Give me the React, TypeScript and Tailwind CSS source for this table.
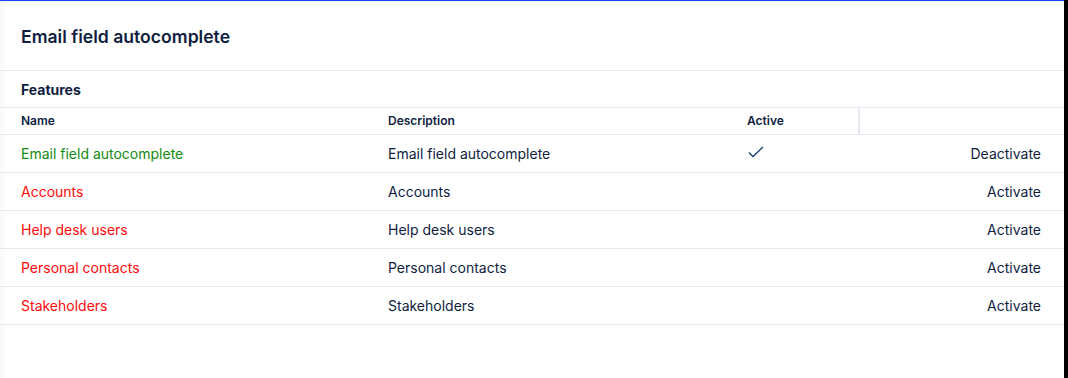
const rows = [
  { name: 'Email field autocomplete', desc: 'Email field autocomplete', active: true },
  { name: 'Accounts', desc: 'Accounts', active: false },
  { name: 'Help desk users', desc: 'Help desk users', active: false },
  { name: 'Personal contacts', desc: 'Personal contacts', active: false },
  { name: 'Stakeholders', desc: 'Stakeholders', active: false },
]

function Check() {
  return (
    <svg width="16" height="12" viewBox="0 0 16 12" fill="none">
      <path d="M1 6.5 L5 10.5 L15 1" stroke="#1e3a6e" strokeWidth="1.3" />
    </svg>
  )
}

export default function App() {
  return (
    <div className="flex h-[378px] w-[1068px] bg-black font-['Inter',sans-serif] text-[#0f1d3f]">
      <div className="h-full w-[1064px] border-t border-[#1148ff] bg-white shadow-[inset_0_10px_10px_-10px_rgba(0,0,0,0.06),inset_10px_0_10px_-10px_rgba(0,0,0,0.06)]">
        {/* Title */}
        <div className="flex h-[70px] items-center border-b border-[#e3e8f1] px-[21px] pt-[3px]">
          <h1 className="text-[17.6px] font-semibold leading-none">Email field autocomplete</h1>
        </div>

        {/* Section */}
        <div className="flex h-[37px] items-center border-b border-[#e3e8f1] px-[21px]">
          <h2 className="text-[14px] font-bold">Features</h2>
        </div>

        {/* Table header */}
        <div className="grid h-[27px] grid-cols-[388px_359px_113px_1fr] border-b border-[#e3e8f1] text-[12px] font-semibold">
          <div className="flex items-center pl-[21px]">Name</div>
          <div className="flex items-center">Description</div>
          <div className="flex items-center border-r-2 border-[#e3e8f1]">Active</div>
          <div />
        </div>

        {rows.map((r) => (
          <div
            key={r.name}
            className="grid h-[38px] grid-cols-[388px_359px_113px_1fr] border-b border-[#e3e8f1] text-[14px]"
          >
            <div className={`flex items-center pl-[21px] ${r.active ? 'text-[#138a12]' : 'text-[#ff0a0a]'}`}>
              {r.name}
            </div>
            <div className="flex items-center">{r.desc}</div>
            <div className="flex items-center pb-[4px] pl-[1px]">{r.active && <Check />}</div>
            <div className="flex items-center justify-end pr-[23px]">
              {r.active ? 'Deactivate' : 'Activate'}
            </div>
          </div>
        ))}
      </div>
    </div>
  )
}
